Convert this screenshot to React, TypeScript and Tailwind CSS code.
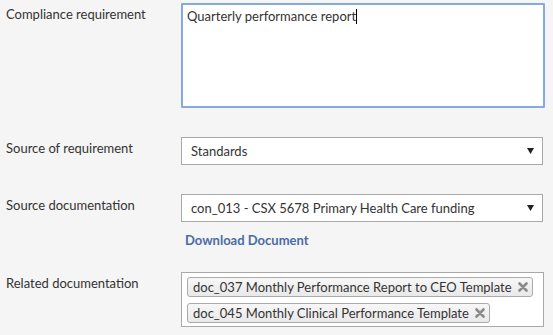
import React from "react";

function Arrow() {
  return (
    <svg width="7" height="6" viewBox="0 0 7 6" className="absolute right-[8px] top-1/2 -translate-y-1/2">
      <path d="M0 0 H7 L3.5 6 Z" fill="#222" />
    </svg>
  );
}

function Chip({ text }: { text: string }) {
  return (
    <div className="flex items-center h-[20px] self-start rounded-[3px] border border-[#aaaaaa] bg-gradient-to-b from-[#f7f7f7] to-[#e9e9e9] pl-[5px] pr-[4px] text-[13px] leading-[16px] text-[#333]">
      <span>{text}</span>
      <svg width="10" height="10" viewBox="0 0 10 10" className="ml-[6px]">
        <path d="M1.5 1.5 L8.5 8.5 M8.5 1.5 L1.5 8.5" stroke="#8a8a8a" strokeWidth="2.6" strokeLinecap="round" />
      </svg>
    </div>
  );
}

export default function App() {
  return (
    <div
      className="w-[553px] h-[335px] bg-[#f5f5f5] text-[#333] pt-[3px]"
      style={{ fontFamily: "Lato, 'Open Sans', sans-serif" }}
    >
      <div className="flex">
        <div className="w-[181px] pl-[6px] pt-[3px] text-[13px] leading-[16px]">Compliance requirement</div>
        <div className="w-[364px] h-[105px] bg-white border-2 border-[#86a8e4] rounded-[1px] pl-[4px] pt-[3px] text-[13px] leading-[16px] text-[#333]">
          Quarterly performance report<span className="inline-block w-[1px] h-[15px] bg-black align-[-3px]" />
        </div>
      </div>

      <div className="flex mt-[29px]">
        <div className="w-[181px] pl-[6px] pt-[3px] text-[13px] leading-[16px]">Source of requirement</div>
        <div className="relative w-[362px] h-[28px] bg-white border border-[#a9a9a9] pl-[9px] flex items-center text-[13px] leading-[16px]">
          Standards
          <Arrow />
        </div>
      </div>

      <div className="flex mt-[29px]">
        <div className="w-[181px] pl-[6px] pt-[3px] text-[13px] leading-[16px]">Source documentation</div>
        <div className="relative w-[362px] h-[28px] bg-white border border-[#a9a9a9] pl-[9px] flex items-center text-[13px] leading-[16px]">
          con_013 - CSX 5678 Primary Health Care funding
          <Arrow />
        </div>
      </div>

      <div className="ml-[185px] mt-[10px] text-[13px] leading-[16px] font-bold text-[#4a6ca6]">Download Document</div>

      <div className="flex mt-[24px]">
        <div className="w-[181px] pl-[6px] pt-[3px] text-[13px] leading-[16px]">Related documentation</div>
        <div className="w-[363px] h-[55px] bg-white border border-[#a9a9a9] pl-[5px] pt-[4px] flex flex-col gap-[6px]">
          <Chip text="doc_037 Monthly Performance Report to CEO Template" />
          <Chip text="doc_045 Monthly Clinical Performance Template" />
        </div>
      </div>
    </div>
  );
}
